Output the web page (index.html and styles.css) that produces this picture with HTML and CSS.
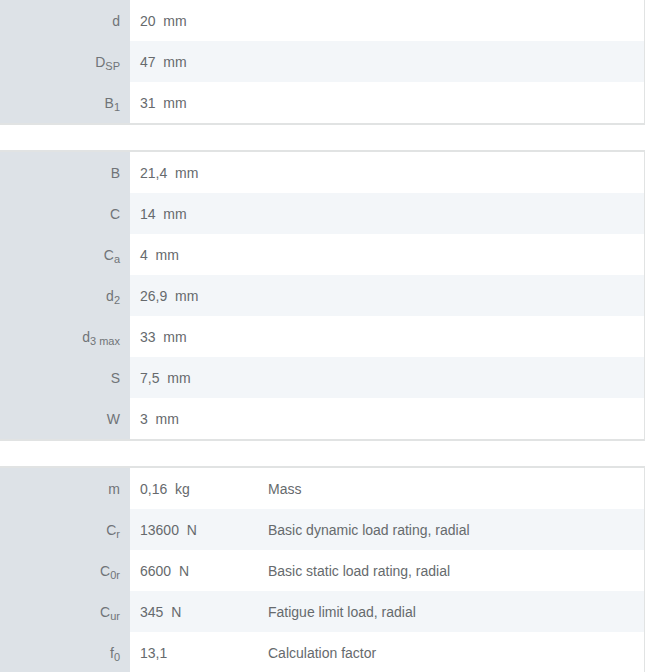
FILE: index.html
```html
<!DOCTYPE html>
<html>
<head>
<meta charset="utf-8">
<link rel="stylesheet" href="styles.css">
</head>
<body>
<div class="sheet">
  <div class="tbl first">
    <div class="row"><div class="lbl">d</div><div class="val">20&nbsp; mm</div><div class="desc"></div></div>
    <div class="row alt"><div class="lbl">D<sub>SP</sub></div><div class="val">47&nbsp; mm</div><div class="desc"></div></div>
    <div class="row"><div class="lbl">B<sub>1</sub></div><div class="val">31&nbsp; mm</div><div class="desc"></div></div>
  </div>
  <div class="tbl">
    <div class="row"><div class="lbl">B</div><div class="val">21,4&nbsp; mm</div><div class="desc"></div></div>
    <div class="row alt"><div class="lbl">C</div><div class="val">14&nbsp; mm</div><div class="desc"></div></div>
    <div class="row"><div class="lbl">C<sub>a</sub></div><div class="val">4&nbsp; mm</div><div class="desc"></div></div>
    <div class="row alt"><div class="lbl">d<sub>2</sub></div><div class="val">26,9&nbsp; mm</div><div class="desc"></div></div>
    <div class="row"><div class="lbl">d<sub>3 max</sub></div><div class="val">33&nbsp; mm</div><div class="desc"></div></div>
    <div class="row alt"><div class="lbl">S</div><div class="val">7,5&nbsp; mm</div><div class="desc"></div></div>
    <div class="row"><div class="lbl">W</div><div class="val">3&nbsp; mm</div><div class="desc"></div></div>
  </div>
  <div class="tbl">
    <div class="row"><div class="lbl">m</div><div class="val">0,16&nbsp; kg</div><div class="desc">Mass</div></div>
    <div class="row alt"><div class="lbl">C<sub>r</sub></div><div class="val">13600&nbsp; N</div><div class="desc">Basic dynamic load rating, radial</div></div>
    <div class="row"><div class="lbl">C<sub>0r</sub></div><div class="val">6600&nbsp; N</div><div class="desc">Basic static load rating, radial</div></div>
    <div class="row alt"><div class="lbl">C<sub>ur</sub></div><div class="val">345&nbsp; N</div><div class="desc">Fatigue limit load, radial</div></div>
    <div class="row"><div class="lbl">f<sub>0</sub></div><div class="val">13,1</div><div class="desc">Calculation factor</div></div>
  </div>
</div>
</body>
</html>
```
FILE: styles.css
```css
html, body {
  margin: 0;
  padding: 0;
  background: #ffffff;
}
body {
  font-family: "Liberation Sans", Arial, sans-serif;
  font-size: 14px;
  color: #666a6d;
}
.sheet {
  width: 645px;
  display: flex;
  flex-direction: column;
  gap: 25px;
}
.tbl {
  border-top: 2px solid #e1e3e3;
  border-bottom: 2px solid #e1e3e3;
  border-right: 1px solid #e1e3e3;
}
.tbl.first {
  border-top: none;
}
.row {
  display: grid;
  grid-template-columns: 130px 128px 1fr;
  height: 41px;
  background: #ffffff;
}
.row.alt {
  background: #f3f6f9;
}
.lbl, .val, .desc {
  display: block;
  padding-top: 1px;
  line-height: 40px;
  white-space: nowrap;
}
.lbl {
  background: #dde2e7;
  text-align: right;
  padding-right: 10px;
  color: #707478;
}
.val {
  padding-left: 10px;
}
.desc {
  padding-left: 10px;
}
sub {
  font-size: 11px;
  vertical-align: -3px;
  line-height: 0;
}
```
